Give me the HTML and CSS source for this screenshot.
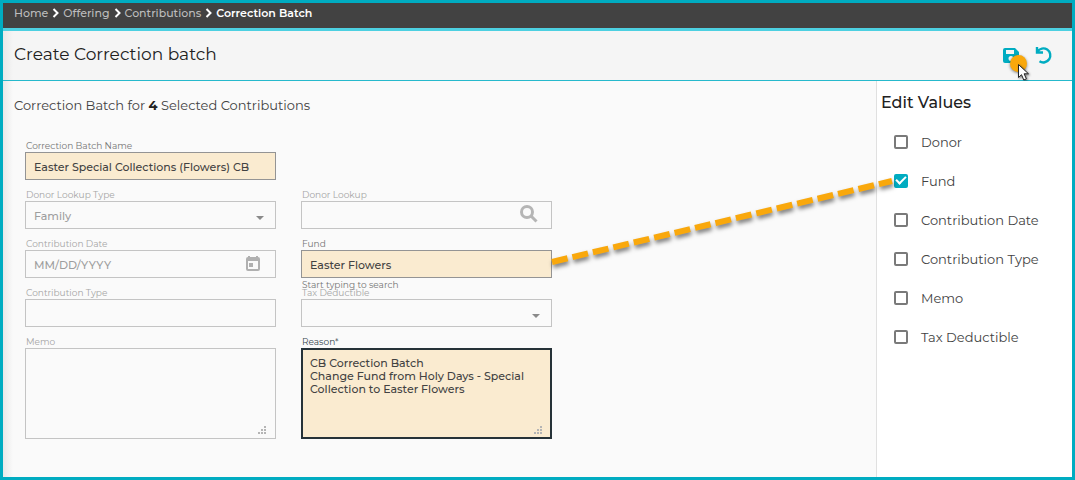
FILE: index.html
```html
<!DOCTYPE html>
<html lang="en">
<head>
    <meta charset="UTF-8">
    <meta name="viewport" content="width=device-width, initial-scale=1.0">
    <title>Create Correction batch</title>
    <link rel="stylesheet" href="styles.css">
</head>
<body>
    <nav class="breadcrumb" aria-label="Breadcrumb">
        <a href="#">Home</a>
        <svg class="chevron" viewBox="0 0 6 10"><path d="M1 1l4 4-4 4"/></svg>
        <a href="#">Offering</a>
        <svg class="chevron" viewBox="0 0 6 10"><path d="M1 1l4 4-4 4"/></svg>
        <a href="#">Contributions</a>
        <svg class="chevron" viewBox="0 0 6 10"><path d="M1 1l4 4-4 4"/></svg>
        <a href="#" class="current" aria-current="page">Correction Batch</a>
    </nav>

    <header class="page-header">
        <h1>Create Correction batch</h1>
        <div class="actions">
            <button type="button" class="icon-button" aria-label="Save">
                <svg width="20" height="20" viewBox="0 0 20 20"><path fill-rule="evenodd" d="M4 3h10l4 4v9a2 2 0 0 1-2 2H4a2 2 0 0 1-2-2V5a2 2 0 0 1 2-2zM5 5v4h8V5zM10 11a2.500 2.500 0 1 0 0 5 2.500 2.500 0 0 0 0-5z"/></svg>
            </button>
            <button type="button" class="icon-button" aria-label="Undo">
                <svg width="20" height="20" viewBox="0 0 20 20"><path d="M3.500 6.500A7 7 0 1 1 5.500 16.300M3 2v5.500h6" fill="none" stroke="#00acc1" stroke-width="2.400"/></svg>
            </button>
            <span class="click-marker"></span>
            <svg class="cursor" width="14" height="19" viewBox="0 0 14 19"><path d="M1.500 1.500v13l3-2.800 2.300 5.300 2.600-1.200-2.300-5h4.400z"/></svg>
        </div>
    </header>

    <div class="content">
        <main class="batch">
            <h2>Correction Batch for <b>4</b> Selected Contributions</h2>
            <form class="fields">
                <div class="field active first">
                    <label for="name">Correction Batch Name</label>
                    <input type="text" id="name" value="Easter Special Collections (Flowers) CB">
                </div>
                <div class="field first">
                    <label for="lookup-type">Donor Lookup Type</label>
                    <select id="lookup-type"><option>Family</option></select>
                    <svg class="arrow" viewBox="0 0 8 4"><path d="M0 0h8L4 4z"/></svg>
                </div>
                <div class="field">
                    <label for="lookup">Donor Lookup</label>
                    <input type="text" id="lookup">
                    <svg class="search-icon" viewBox="0 0 18 18"><circle cx="7" cy="7" r="5.500"/><path d="M11 11l5.500 5.500"/></svg>
                </div>
                <div class="field">
                    <label for="date">Contribution Date</label>
                    <input type="text" id="date" placeholder="MM/DD/YYYY">
                    <svg class="date-icon" viewBox="0 0 14 15"><path d="M3 0v3M11 0v3M1 3h12"/><rect x="1" y="2" width="12" height="12" rx="1"/><path d="M1 4h12"/><path class="day" d="M3 7h4v4H3z"/></svg>
                </div>
                <div class="field active">
                    <label for="fund">Fund</label>
                    <input type="text" id="fund" value="Easter Flowers" aria-describedby="fund-hint">
                    <span class="hint" id="fund-hint">Start typing to search</span>
                </div>
                <div class="field">
                    <label for="type">Contribution Type</label>
                    <input type="text" id="type">
                </div>
                <div class="field">
                    <label for="tax">Tax Deductible</label>
                    <select id="tax"><option></option></select>
                    <svg class="arrow" viewBox="0 0 8 4"><path d="M0 0h8L4 4z"/></svg>
                </div>
                <div class="field">
                    <label for="memo">Memo</label>
                    <textarea id="memo"></textarea>
                    <svg class="grip" viewBox="0 0 8 8"><path d="M6 0h2v2H6zM3 3h2v2H3zM6 3h2v2H6zM0 6h2v2H0zM3 6h2v2H3zM6 6h2v2H6z"/></svg>
                </div>
                <div class="field active required">
                    <label for="reason">Reason*</label>
                    <textarea id="reason">CB Correction Batch
Change Fund from Holy Days - Special Collection to Easter Flowers</textarea>
                    <svg class="grip" viewBox="0 0 8 8"><path d="M6 0h2v2H6zM3 3h2v2H3zM6 3h2v2H6zM0 6h2v2H0zM3 6h2v2H3zM6 6h2v2H6z"/></svg>
                </div>
            </form>
        </main>

        <aside class="edit-values">
            <h2>Edit Values</h2>
            <label><input type="checkbox">Donor</label>
            <label><input type="checkbox" checked>Fund</label>
            <label><input type="checkbox">Contribution Date</label>
            <label><input type="checkbox">Contribution Type</label>
            <label><input type="checkbox">Memo</label>
            <label><input type="checkbox">Tax Deductible</label>
        </aside>

        <!-- links the Fund field to its checkbox -->
        <svg class="connector" width="346" height="96" viewBox="0 0 346 96"><path d="M4 87L344 6"/></svg>
    </div>
</body>
</html>
```
FILE: styles.css
```css
* {
    box-sizing: border-box;
}
body {
    margin: 0;
    min-height: 100vh;
    display: flex;
    flex-direction: column;
    border: 3px solid #00acc1;
    background: #fafafa;
    color: #424242;
    font-family: Montserrat, Inter, sans-serif;
    font-size: 13px;
}
h1, h2 {
    margin: 0;
    font-weight: 400;
}
.breadcrumb {
    display: flex;
    align-items: center;
    gap: 4px;
    height: 28px;
    padding: 0 11px 5px;
    background: #424242;
    border-bottom: 3px solid #4dd0e1;
    font-size: 11px;
    font-weight: 500;
}
.breadcrumb a {
    color: #bdbdbd;
    text-decoration: none;
}
.breadcrumb .current {
    color: #fff;
    font-weight: 600;
}
.chevron {
    width: 7px;
    height: 10px;
    fill: none;
    stroke: #fff;
    stroke-width: 2;
}
.page-header {
    display: flex;
    align-items: center;
    justify-content: space-between;
    height: 50px;
    padding: 0 18px 2px 11px;
    background: linear-gradient(to right, #e8e8e8, #f5f5f5 10px);
    border-bottom: 1px solid #26b9cc;
}
.page-header h1 {
    padding-bottom: 2px;
    color: #212121;
    font-size: 17px;
}
.actions {
    position: relative;
    display: flex;
    gap: 13px;
}
.icon-button {
    width: 20px;
    height: 20px;
    padding: 0;
    border: 0;
    background: none;
    fill: #00acc1;
}
.click-marker {
    position: absolute;
    left: 9px;
    top: 10px;
    width: 17px;
    height: 17px;
    border-radius: 50%;
    background: #f9a80c;
    box-shadow: 0 1px 3px rgba(0, 0, 0, 0.5);
}
.cursor {
    position: absolute;
    left: 16px;
    top: 18px;
    fill: #fff;
    stroke: #222;
    filter: drop-shadow(1px 1px 1px rgba(0, 0, 0, 0.5));
}
.content {
    position: relative;
    flex: 1;
    display: flex;
}
.batch {
    flex: 1;
    padding: 15px 22px 16px 11px;
    background: linear-gradient(to right, #e8e8e8, #fafafa 10px);
}
.batch h2 {
    font-size: 13px;
    line-height: 18px;
}
.batch b {
    color: #212121;
    font-weight: 700;
}
.fields {
    display: grid;
    grid-template-columns: repeat(2, minmax(120px, 251px));
    column-gap: 25px;
    row-gap: 9px;
    padding: 26px 0 0 11px;
}
.field {
    position: relative;
    display: flex;
    flex-direction: column;
    color: #a5a5a5;
}
.field.first {
    grid-column: 1;
}
.field label,
.hint {
    padding-left: 1px;
    font-size: 9px;
    line-height: 12px;
}
.field input,
.field select,
.field textarea {
    width: 100%;
    height: 28px;
    margin: 0;
    padding: 2px 8px 0;
    border: 1px solid #c4c4c4;
    border-radius: 0;
    outline: 0;
    background: #fafafa;
    color: #9e9e9e;
    font-family: inherit;
    font-size: 11px;
    font-weight: 500;
    appearance: none;
}
.field input::placeholder {
    color: #9e9e9e;
    opacity: 1;
}
.field textarea {
    display: block;
    height: 91px;
    padding: 8px;
    line-height: 13px;
    resize: none;
    overflow: hidden;
}
.field.active label,
.hint {
    color: #757575;
}
.field.active input,
.field.active textarea {
    border-color: #949494;
    background: #faebd0;
    color: #424242;
}
.field.required label {
    color: #37474f;
}
.field.required textarea {
    padding: 7px;
    border: 2px solid #263238;
}
.hint {
    position: absolute;
    top: 41px;
    left: 0;
}
.arrow {
    position: absolute;
    right: 12px;
    top: 27px;
    width: 8px;
    height: 4px;
    fill: #8a8a8a;
}
.search-icon {
    position: absolute;
    right: 14px;
    top: 16px;
    width: 18px;
    height: 18px;
    fill: none;
    stroke: #b5b5b5;
    stroke-width: 3;
}
.date-icon {
    position: absolute;
    right: 16px;
    top: 18px;
    width: 14px;
    height: 15px;
    fill: none;
    stroke: #b0b0b0;
    stroke-width: 2;
}
.date-icon .day {
    fill: #b0b0b0;
    stroke: none;
}
.grip {
    position: absolute;
    right: 10px;
    bottom: 5px;
    width: 8px;
    height: 8px;
    fill: #b5b5b5;
}
.edit-values {
    width: 196px;
    padding: 11px 4px;
    border-left: 1px solid #e0e0e0;
    background: #fff;
}
.edit-values h2 {
    margin-bottom: 8px;
    color: #212121;
    font-size: 16px;
    font-weight: 500;
    line-height: 22px;
}
.edit-values label {
    display: flex;
    align-items: center;
    gap: 13px;
    height: 39px;
    padding-left: 13px;
}
.edit-values input {
    width: 14px;
    height: 14px;
    margin: 0;
    border: 2px solid #7a7a7a;
    border-radius: 2px;
    appearance: none;
}
.edit-values input:checked {
    display: grid;
    place-items: center;
    border-color: #00acc1;
    background: #00acc1;
}
.edit-values input:checked::before {
    content: "";
    width: 8px;
    height: 4px;
    margin-bottom: 3px;
    border: solid #fff;
    border-width: 0 0 2px 2px;
    transform: rotate(-45deg);
}
.connector {
    position: absolute;
    right: 178px;
    top: 94px;
    fill: none;
    stroke: #f9a80c;
    stroke-width: 6;
    stroke-dasharray: 16 5;
    filter: drop-shadow(1px 3px 2px rgba(0, 0, 0, 0.5));
    pointer-events: none;
}
```
